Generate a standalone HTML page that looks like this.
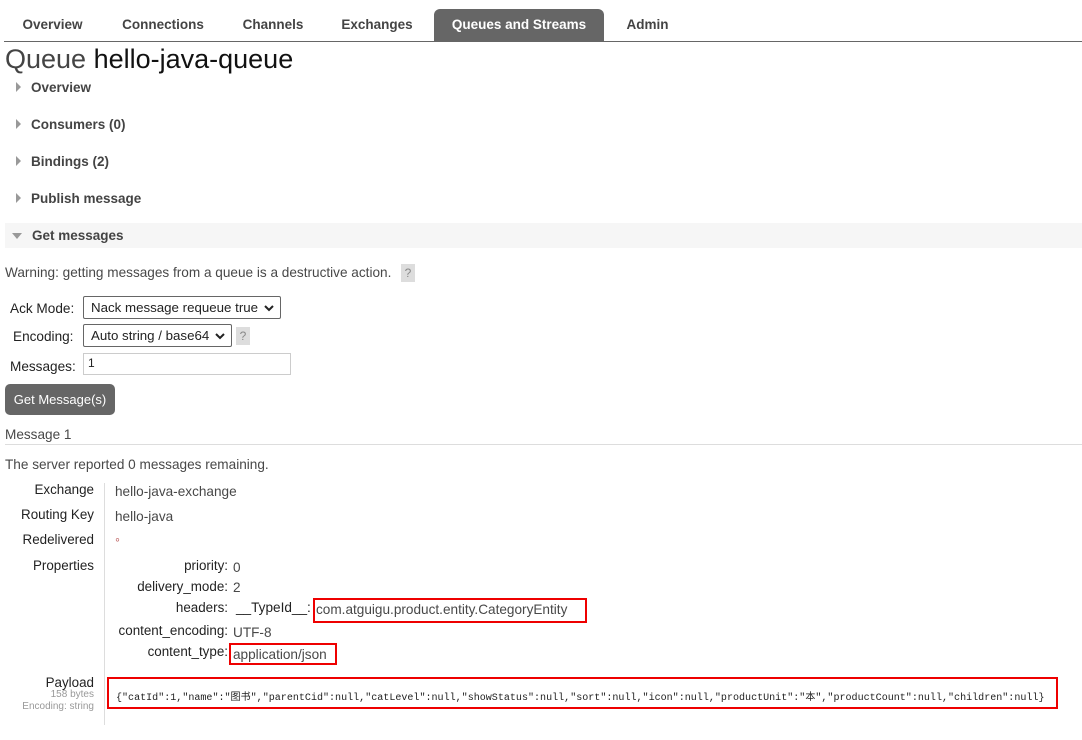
<!DOCTYPE html>
<html><head><meta charset="utf-8"><style>
body{margin:0;width:1082px;height:740px;background:#fff;font-family:"Liberation Sans","Noto Sans CJK SC",sans-serif;color:#484848;position:relative;overflow:hidden}
.a{position:absolute;white-space:nowrap}
.tab{position:absolute;top:9px;height:32px;line-height:32px;font-size:13.5px;font-weight:bold;color:#444;text-align:center}
.sec{position:absolute;left:5px;width:1077px;height:25px;line-height:25px;font-size:13.5px;font-weight:bold;color:#444}
.sec i{display:inline-block;width:0;height:0;border-top:5px solid transparent;border-bottom:5px solid transparent;border-left:5px solid #999;margin:0 10px 0 11px}
.lbl{font-size:13.4px;color:#222;text-align:right;width:90px}
.val{font-size:13.6px;color:#484848}
.sel{position:absolute;border:1px solid #666;border-radius:2px;height:23px;line-height:21px;font-size:13.3px;color:#222;padding-left:7px;box-sizing:border-box}
.sel svg{position:absolute;right:6px;top:8px}
.q{position:absolute;background:#ddd;color:#888;font-size:12px;width:14px;height:18px;line-height:18px;text-align:center}
.red{position:absolute;border:2px solid #e00;box-sizing:border-box}
</style></head><body>
<div class="tab" style="left:5px;width:95px">Overview</div>
<div class="tab" style="left:106px;width:114px">Connections</div>
<div class="tab" style="left:226px;width:94px">Channels</div>
<div class="tab" style="left:326px;width:102px">Exchanges</div>
<div class="tab" style="left:434px;width:170px;background:#666;color:#fff;border-radius:6px 6px 0 0">Queues and Streams</div>
<div class="tab" style="left:610px;width:75px">Admin</div>
<div class="a" style="left:4px;top:41px;width:1078px;height:1px;background:#666"></div>
<div class="a" style="left:5px;top:44px;font-size:27px;color:#444">Queue <span style="color:#111">hello-java-queue</span></div>
<div class="sec" style="top:75px"><i></i>Overview</div>
<div class="sec" style="top:112px"><i></i>Consumers (0)</div>
<div class="sec" style="top:149px"><i></i>Bindings (2)</div>
<div class="sec" style="top:186px"><i></i>Publish message</div>
<div class="sec" style="top:223px;background:#f6f6f6"><i style="border-left:5px solid transparent;border-right:5px solid transparent;border-top:6px solid #999;border-bottom:0;margin-left:7px;vertical-align:1px"></i>Get messages</div>
<div class="a val" style="left:5px;top:265px">Warning: getting messages from a queue is a destructive action.</div>
<div class="q" style="left:401px;top:264px">?</div>
<div class="a val" style="left:10px;top:301px;color:#222">Ack Mode:</div>
<div class="sel" style="left:83px;top:296px;width:198px">Nack message requeue true<svg width="10" height="7"><path d="M1 1L5 5L9 1" stroke="#222" stroke-width="2" fill="none"/></svg></div>
<div class="a val" style="left:13px;top:329px;color:#222">Encoding:</div>
<div class="sel" style="left:83px;top:324px;width:149px">Auto string / base64<svg width="10" height="7"><path d="M1 1L5 5L9 1" stroke="#222" stroke-width="2" fill="none"/></svg></div>
<div class="q" style="left:236px;top:327px">?</div>
<div class="a val" style="left:10px;top:359px;color:#222">Messages:</div>
<div class="a" style="left:83px;top:353px;width:208px;height:22px;border:1px solid #ccc;box-sizing:border-box;font-size:12px;padding:2px 4px;color:#222">1</div>
<div class="a" style="left:5px;top:384px;width:110px;height:31px;background:#666;border-radius:5px;color:#fff;font-size:13px;line-height:31px;text-align:center">Get Message(s)</div>
<div class="a val" style="left:5px;top:427px">Message 1</div>
<div class="a" style="left:5px;top:444px;width:1077px;height:1px;background:#ddd"></div>
<div class="a val" style="left:5px;top:457px">The server reported 0 messages remaining.</div>
<div class="a" style="left:104px;top:483px;width:1px;height:242px;background:#ddd"></div>
<div class="a lbl" style="left:4px;top:482px">Exchange</div>
<div class="a lbl" style="left:4px;top:507px">Routing Key</div>
<div class="a lbl" style="left:4px;top:532px">Redelivered</div>
<div class="a lbl" style="left:4px;top:558px">Properties</div>
<div class="a val" style="left:115px;top:484px">hello-java-exchange</div>
<div class="a val" style="left:115px;top:509px">hello-java</div>
<div class="a val" style="left:115px;top:532px;color:#a33">&#9702;</div>
<div class="a lbl" style="left:38px;width:190px;top:558px">priority:</div>
<div class="a lbl" style="left:38px;width:190px;top:579px">delivery_mode:</div>
<div class="a lbl" style="left:38px;width:190px;top:600px">headers:</div>
<div class="a lbl" style="left:38px;width:190px;top:623px">content_encoding:</div>
<div class="a lbl" style="left:38px;width:190px;top:644px">content_type:</div>
<div class="a val" style="left:233px;top:560px">0</div>
<div class="a val" style="left:233px;top:580px">2</div>
<div class="a val" style="left:236px;top:600px;color:#222">__TypeId__:</div>
<div class="a val" style="left:316px;top:602px">com.atguigu.product.entity.CategoryEntity</div>
<div class="red" style="left:313px;top:598px;width:274px;height:25px"></div>
<div class="a val" style="left:233px;top:625px">UTF-8</div>
<div class="a val" style="left:233px;top:647px">application/json</div>
<div class="red" style="left:229px;top:643px;width:108px;height:22px"></div>
<div class="a lbl" style="left:4px;top:675px">Payload</div>
<div class="a" style="left:4px;top:689px;width:90px;text-align:right;font-size:10px;color:#999">158 bytes</div>
<div class="a" style="left:4px;top:701px;width:90px;text-align:right;font-size:10px;color:#999">Encoding: string</div>
<div class="red" style="left:107px;top:677px;width:951px;height:32px"></div>
<div class="a" style="left:116px;top:688px;font-family:'Liberation Mono','Noto Sans CJK SC',monospace;font-size:10.05px;color:#222">{"catId":1,"name":"图书","parentCid":null,"catLevel":null,"showStatus":null,"sort":null,"icon":null,"productUnit":"本","productCount":null,"children":null}</div>
</body></html>
